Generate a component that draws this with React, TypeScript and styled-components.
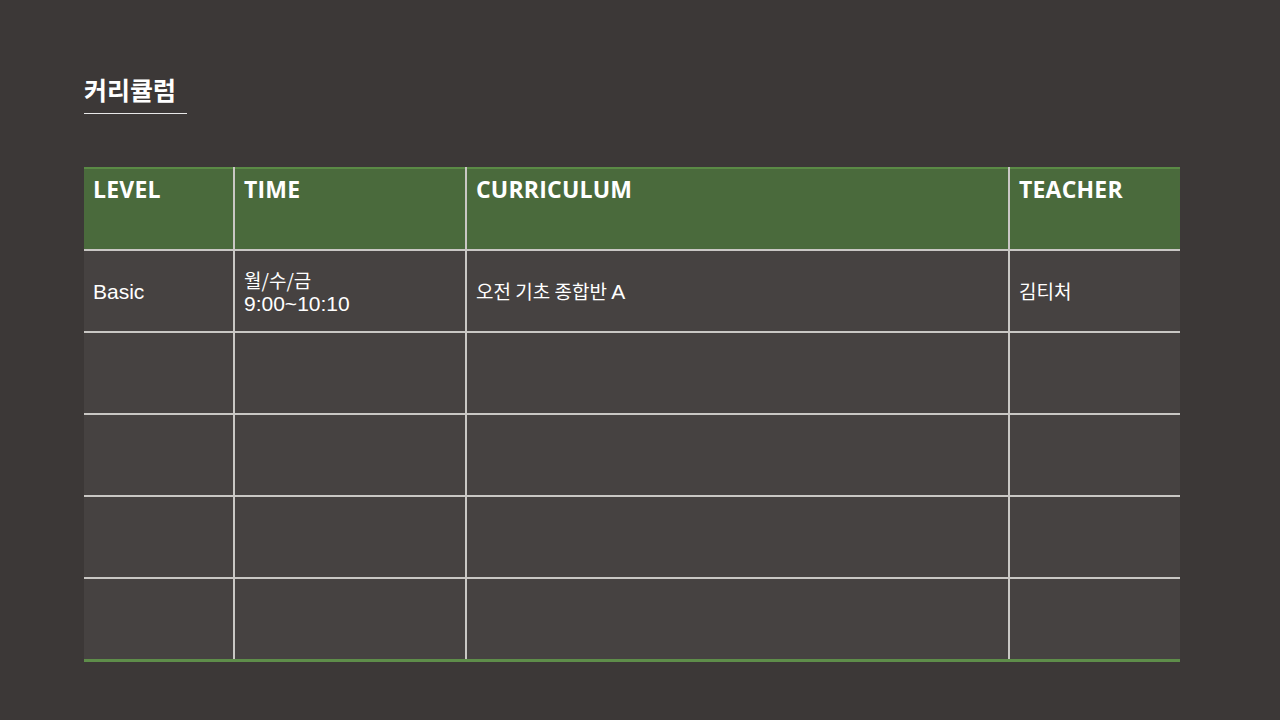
import React from "react";
import styled, { createGlobalStyle } from "styled-components";

const Global = createGlobalStyle`
  html, body { margin: 0; padding: 0; background: #3c3837; }
  body { font-family: "Noto Sans CJK KR", "Noto Sans", sans-serif; color: #fff; }
`;

const Page = styled.div`
  width: 1280px;
  height: 720px;
  box-sizing: border-box;
  padding: 72px 100px 0 84px;
  background: #3c3837;
  display: flex;
  flex-direction: column;
`;

const TitleWrap = styled.div`
  align-self: flex-start;
  display: flex;
  flex-direction: column;
`;

const Title = styled.h1`
  margin: 0;
  font-family: "Noto Sans CJK KR", sans-serif;
  font-weight: 700;
  font-size: 25px;
  line-height: 35px;
  color: #ffffff;
`;

const Underline = styled.div`
  width: 103px;
  height: 1px;
  margin-top: 6px;
  background: #e8e8e8;
`;

const Table = styled.table`
  margin-top: 53px;
  width: 1096px;
  border-collapse: collapse;
  table-layout: fixed;
  border-top: 2px solid #5a8a45;
  border-bottom: 3px solid #5e8d4a;
`;

const HeadCell = styled.th<{ $w: number }>`
  width: ${(p) => p.$w}px;
  height: 82px;
  box-sizing: border-box;
  background: #4a6a3c;
  text-align: left;
  vertical-align: top;
  padding: 5px 10px 0 9px;
  font-family: "Open Sans", "Noto Sans", sans-serif;
  font-weight: 700;
  font-size: 23px;
  letter-spacing: 0.2px;
  line-height: 30px;
  color: #ffffff;
  border-left: 2px solid #c9c7c4;
  border-bottom: 2px solid #c9c7c4;
  &:first-child { border-left: none; }
`;

const Cell = styled.td`
  height: 82px;
  box-sizing: border-box;
  background: #464241;
  padding: 0 10px 0 9px;
  vertical-align: middle;
  font-family: "Liberation Sans", Arial, sans-serif;
  font-size: 21px;
  line-height: 23px;
  color: #ffffff;
  border-left: 2px solid #c9c7c4;
  border-bottom: 2px solid #c9c7c4;
  &:first-child { border-left: none; }
`;

const Ko = styled.span`
  font-family: "Noto Sans CJK KR", sans-serif;
  font-size: 19px;
`;

const Row = styled.tr`
  &:last-child td { border-bottom: none; }
`;

const cols = [
  { label: "LEVEL", w: 150 },
  { label: "TIME", w: 232 },
  { label: "CURRICULUM", w: 543 },
  { label: "TEACHER", w: 171 },
];

const rows: React.ReactNode[][] = [
  [
    "Basic",
    <>
      <Ko>월/수/금</Ko>
      <br />
      9:00~10:10
    </>,
    <>
      <Ko>오전 기초 종합반 </Ko>A
    </>,
    <Ko>김티처</Ko>,
  ],
  ["", "", "", ""],
  ["", "", "", ""],
  ["", "", "", ""],
  ["", "", "", ""],
];

export default function App() {
  return (
    <Page>
      <Global />
      <TitleWrap>
        <Title>커리큘럼</Title>
        <Underline />
      </TitleWrap>
      <Table>
        <thead>
          <tr>
            {cols.map((c) => (
              <HeadCell key={c.label} $w={c.w}>
                {c.label}
              </HeadCell>
            ))}
          </tr>
        </thead>
        <tbody>
          {rows.map((r, i) => (
            <Row key={i}>
              {r.map((v, j) => (
                <Cell key={j}>{v}</Cell>
              ))}
            </Row>
          ))}
        </tbody>
      </Table>
    </Page>
  );
}
